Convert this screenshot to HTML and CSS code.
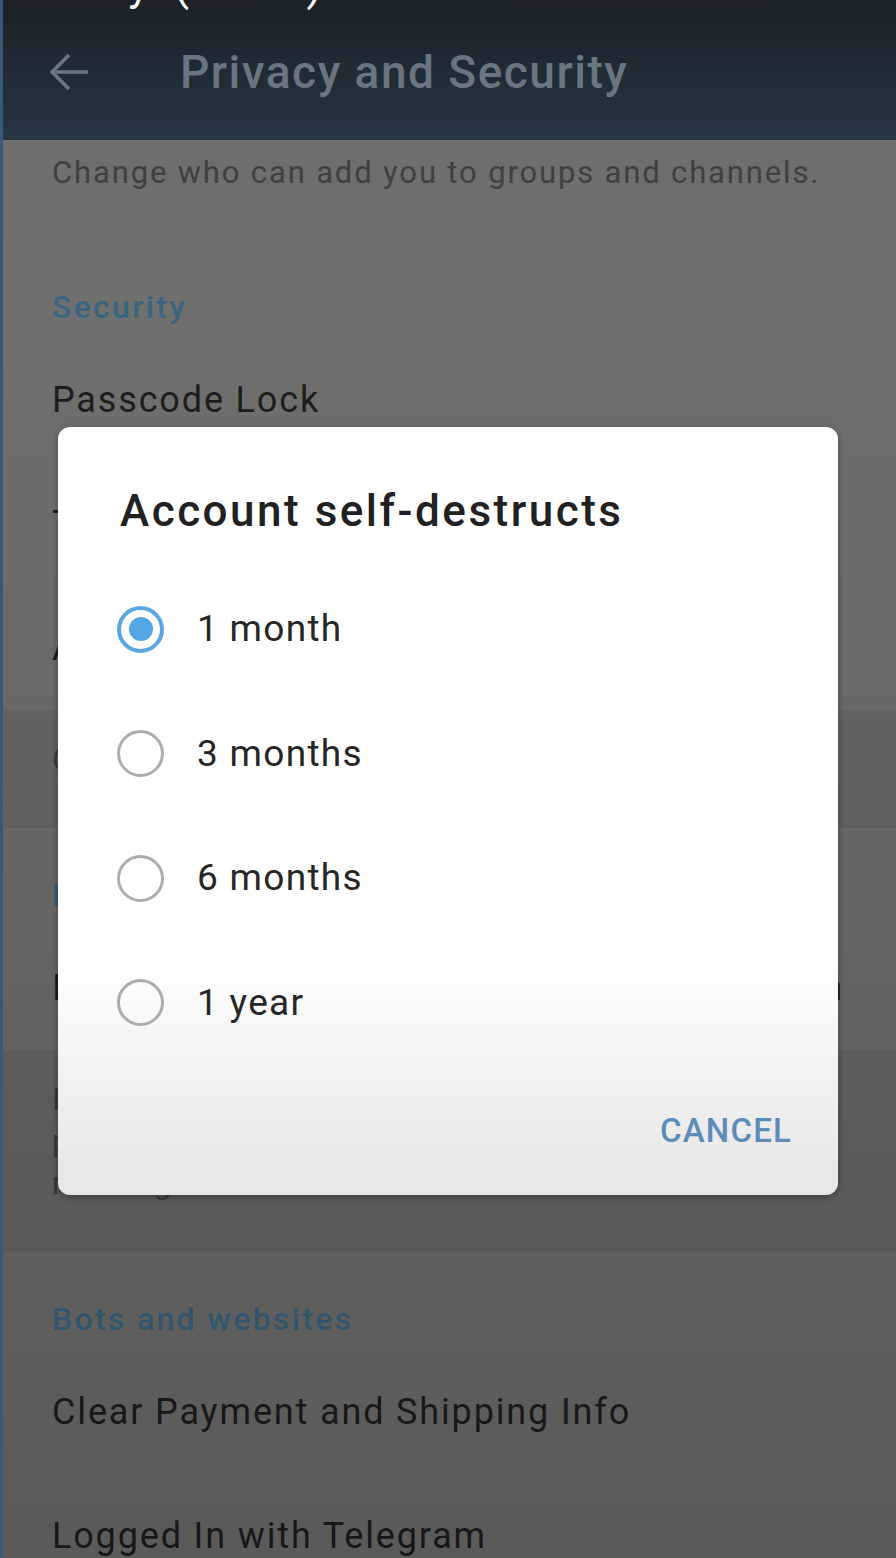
FILE: index.html
```html
<!DOCTYPE html>
<html lang="en">
<head>
<meta charset="utf-8">
<title>Privacy and Security</title>
<link rel="stylesheet" href="styles.css">
</head>
<body>
<div class="screen">
  <header class="appbar">
    <div class="caption"><span>Privacy</span> <span class="caption-part">(Part 1)</span></div>
    <div class="toolbar">
      <svg class="back" width="44" height="44" viewBox="0 0 44 44" aria-hidden="true">
        <path d="M41 22H5M22 5L5 22L22 39" fill="none" stroke="currentColor" stroke-width="3.6" stroke-linecap="butt" stroke-linejoin="miter"/>
      </svg>
      <h1 class="title">Privacy and Security</h1>
    </div>
  </header>

  <main class="list">
    <section class="info info-first">
      <p>Change who can add you to groups and channels.</p>
    </section>

    <section class="group">
      <div class="group-title">Security</div>
      <div class="row"><span>Passcode Lock</span></div>
      <div class="row"><span>Two-Step Verification</span></div>
      <div class="row"><span>Active Sessions</span></div>
    </section>

    <section class="info">
      <p>Control your sessions on other devices.</p>
    </section>

    <section class="group">
      <div class="group-title">Delete my account</div>
      <div class="row"><span>If away for</span><span class="value">1 month</span></div>
    </section>

    <section class="info">
      <p>If you do not come online at least once within this period, your account will be deleted along with all messages and contacts.</p>
    </section>

    <section class="group">
      <div class="group-title">Bots and websites</div>
      <div class="row"><span>Clear Payment and Shipping Info</span></div>
      <div class="row"><span>Logged In with Telegram</span></div>
    </section>
  </main>

  <div class="dialog" role="dialog" aria-label="Account self-destructs">
    <h2 class="dialog-title">Account self-destructs</h2>
    <ul class="options">
      <li class="option selected"><span class="radio"></span><span class="label">1 month</span></li>
      <li class="option"><span class="radio"></span><span class="label">3 months</span></li>
      <li class="option"><span class="radio"></span><span class="label">6 months</span></li>
      <li class="option"><span class="radio"></span><span class="label">1 year</span></li>
    </ul>
    <div class="actions">
      <button class="btn-cancel" type="button">CANCEL</button>
    </div>
  </div>
</div>
</body>
</html>
```

FILE: styles.css
```css
* {
  box-sizing: border-box;
}

html, body {
  margin: 0;
  padding: 0;
  background: #5a5b59;
}

body {
  font-family: Roboto, "Noto Sans", "Liberation Sans", sans-serif;
}

.screen {
  position: relative;
  width: 896px;
  height: 1558px;
  overflow: hidden;
  border-left: 3px solid #3b5877;
  background: #6f706e;
}

/* ---------- App bar ---------- */
.appbar {
  position: relative;
  height: 140px;
  background: linear-gradient(to bottom, #1b2127 0%, #212c35 55%, #263643 100%);
}

.caption {
  position: absolute;
  top: -37px;
  left: 4px;
  font-size: 44px;
  line-height: 44px;
  color: #ffffff;
  white-space: nowrap;
}

.caption-part {
  margin-left: 14px;
}

.toolbar {
  display: flex;
  align-items: center;
  height: 140px;
  padding: 4px 0 0 44px;
  color: #6a7580;
}

.back {
  display: block;
  flex: none;
}

.title {
  margin: 0 0 0 89px;
  font-size: 46px;
  font-weight: 500;
  line-height: 56px;
  letter-spacing: 1.5px;
  color: #6a7580;
  white-space: nowrap;
}

/* ---------- Settings list (dimmed) ---------- */
.list {
  position: relative;
}

.list::after {
  content: "";
  position: absolute;
  inset: 0;
  background: linear-gradient(to bottom, rgba(0,0,0,0) 0%, rgba(0,0,0,0) 12%, rgba(0,0,0,0.2) 100%);
  pointer-events: none;
}

.info {
  background: #686967;
  padding: 29px 49px 47px;
}

.info-first {
  background: #6e6f6d;
  padding: 12px 49px 46px;
}

.info p {
  margin: 0;
  font-size: 31px;
  line-height: 42px;
  letter-spacing: 1.85px;
  color: #3f403f;
}

.group {
  background: #6f706e;
}

.group-title {
  padding: 47px 49px 11px;
  font-size: 32px;
  font-weight: 500;
  line-height: 40px;
  letter-spacing: 2.3px;
  color: #3a6580;
}

.row {
  display: flex;
  align-items: center;
  justify-content: space-between;
  height: 124px;
  padding: 0 52px 0 49px;
  font-size: 36px;
  line-height: 44px;
  letter-spacing: 1.85px;
  color: #1d1d1d;
  white-space: nowrap;
}

.value {
  color: #1d1d1d;
}

/* ---------- Dialog ---------- */
.dialog {
  position: absolute;
  left: 55px;
  top: 427px;
  width: 780px;
  height: 768px;
  border-radius: 12px;
  background: linear-gradient(to bottom, #ffffff 0%, #ffffff 70%, #f1f1f1 85%, #e6e6e6 100%);
  box-shadow: 0 2px 6px rgba(0,0,0,0.35);
  padding-top: 56px;
  z-index: 2;
}

.dialog-title {
  margin: 0 0 28px;
  padding-left: 62px;
  font-size: 44px;
  font-weight: 500;
  line-height: 56px;
  letter-spacing: 2.5px;
  color: #212121;
}

.options {
  list-style: none;
  margin: 0;
  padding: 0;
}

.option {
  display: flex;
  align-items: center;
  height: 124.5px;
  padding-left: 59px;
}

.radio {
  position: relative;
  flex: none;
  width: 47px;
  height: 47px;
  border-radius: 50%;
  border: 3.6px solid #adadad;
}

.option.selected .radio {
  border: 4px solid #5aa6de;
}

.option.selected .radio::after {
  content: "";
  position: absolute;
  left: 7.5px;
  top: 7.5px;
  width: 24px;
  height: 24px;
  border-radius: 50%;
  background: #55a6e5;
}

.label {
  margin-left: 33px;
  font-size: 37px;
  line-height: 48px;
  letter-spacing: 1.3px;
  color: #262626;
}

.actions {
  display: flex;
  justify-content: flex-end;
  margin-top: 42px;
  padding-right: 46px;
}

.btn-cancel {
  border: 0;
  background: transparent;
  padding: 0;
  font-family: inherit;
  font-size: 33px;
  font-weight: 500;
  line-height: 48px;
  letter-spacing: 1.2px;
  color: #5b8db8;
}
```
